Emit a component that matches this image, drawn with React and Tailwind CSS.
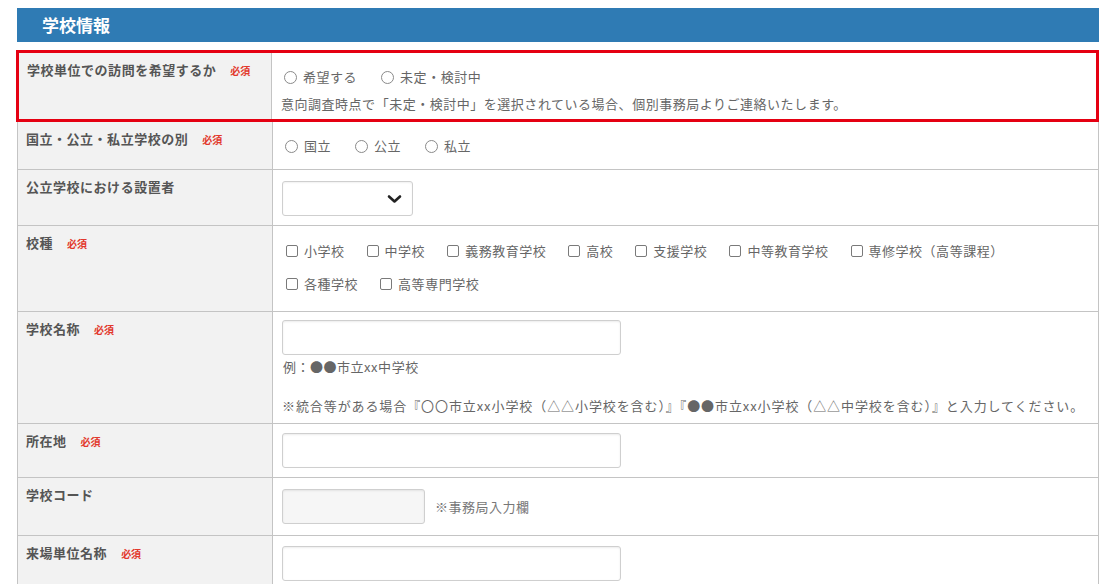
import React from 'react';

const font = { fontFamily: '"Noto Sans CJK JP", "Noto Sans", sans-serif' };

const Required = () => (
  <span className="ml-[14px] text-[10px] font-bold text-[#e2382c] tracking-normal">必須</span>
);

const Radio = ({ label }) => (
  <label className="flex items-center gap-[6px]">
    <span className="inline-block w-[13px] h-[13px] rounded-full border border-[#8a8a8a] bg-white" />
    <span>{label}</span>
  </label>
);

const Check = ({ label }) => (
  <label className="flex items-center gap-[6px]">
    <span className="inline-block w-[12px] h-[12px] rounded-[2px] border border-[#7a7a7a] bg-white" />
    <span>{label}</span>
  </label>
);

const TextInput = ({ width = 'w-[339px]', className = '' }) => (
  <input
    readOnly
    className={`${width} h-[35px] rounded-[3px] border border-[#cfcfcf] shadow-[inset_0_1px_2px_rgba(0,0,0,0.08)] outline-none ${className}`}
  />
);

// 1行分: 左がラベル、右が入力
const Row = ({ label, required, children, className = 'border-x border-b border-[#c4c4c4]', labelW = 'w-[255px]', contentCls = '' }) => (
  <div className={`flex ${className}`}>
    <div className={`${labelW} shrink-0 bg-[#f2f2f2] border-r border-[#c4c4c4] pl-[8px] pt-[7px] font-bold text-[#555]`}>
      {label}
      {required && <Required />}
    </div>
    <div className={`flex-1 bg-white pl-[9px] text-[#666] ${contentCls}`}>{children}</div>
  </div>
);

export default function App() {
  return (
    <div className="min-h-screen bg-white" style={font}>
      <div className="ml-[17px] w-[1082px] pt-[8px] text-[13px] leading-[20px] tracking-[0.04em]">
        <div className="h-[34px] bg-[#2f7bb4] pl-[25px] flex items-center text-white text-[17px] font-bold tracking-normal">
          学校情報
        </div>

        <div className="mt-[8px]">
          <Row
            label="学校単位での訪問を希望するか"
            required
            className="border-[3px] border-[#e50012] -ml-px"
            labelW="w-[253px]"
            contentCls="pt-[14px] pb-[5px]"
          >
            <div className="flex gap-[24px] pl-[3px]">
              <Radio label="希望する" />
              <Radio label="未定・検討中" />
            </div>
            <p className="mt-[7px]">意向調査時点で「未定・検討中」を選択されている場合、個別事務局よりご連絡いたします。</p>
          </Row>

          <Row label="国立・公立・私立学校の別" required contentCls="pt-[14px] pb-[13px]">
            <div className="flex gap-[24px] pl-[3px]">
              <Radio label="国立" />
              <Radio label="公立" />
              <Radio label="私立" />
            </div>
          </Row>

          <Row label="公立学校における設置者" contentCls="pt-[11px] pb-[9px]">
            <div className="relative w-[131px] h-[35px] rounded-[3px] border border-[#cfcfcf] bg-white shadow-[inset_0_1px_2px_rgba(0,0,0,0.06)]">
              <svg className="absolute right-[10px] top-[12px]" width="15" height="10" viewBox="0 0 15 10">
                <path d="M2 2.5 L7.5 7.5 L13 2.5" fill="none" stroke="#222" strokeWidth="2.6" strokeLinecap="round" strokeLinejoin="round" />
              </svg>
            </div>
          </Row>

          <Row label="校種" required contentCls="pt-[15px] pb-[17px]">
            <div className="flex flex-wrap gap-x-[22px] gap-y-[13px] pl-[4px]">
              <Check label="小学校" />
              <Check label="中学校" />
              <Check label="義務教育学校" />
              <Check label="高校" />
              <Check label="支援学校" />
              <Check label="中等教育学校" />
              <Check label="専修学校（高等課程）" />
            </div>
            <div className="flex gap-x-[22px] mt-[13px] pl-[4px]">
              <Check label="各種学校" />
              <Check label="高等専門学校" />
            </div>
          </Row>

          <Row label="学校名称" required contentCls="pt-[8px] pb-[7px]">
            <TextInput />
            <p className="mt-[2px] pl-[1px]">例：●●市立xx中学校</p>
            <p className="mt-[19px] tracking-[0.07em]">※統合等がある場合『〇〇市立xx小学校（△△小学校を含む）』『●●市立xx小学校（△△中学校を含む）』と入力してください。</p>
          </Row>

          <Row label="所在地" required contentCls="pt-[9px] pb-[9px]">
            <TextInput />
          </Row>

          <Row label="学校コード" contentCls="pt-[11px] pb-[11px]">
            <div className="flex items-center gap-[10px]">
              <TextInput width="w-[143px]" className="h-[34px] bg-[#f6f6f6]" />
              <span className="text-[#777]">※事務局入力欄</span>
            </div>
          </Row>

          <Row label="来場単位名称" required contentCls="pt-[10px] pb-[9px]">
            <TextInput />
          </Row>
        </div>
      </div>
    </div>
  );
}
